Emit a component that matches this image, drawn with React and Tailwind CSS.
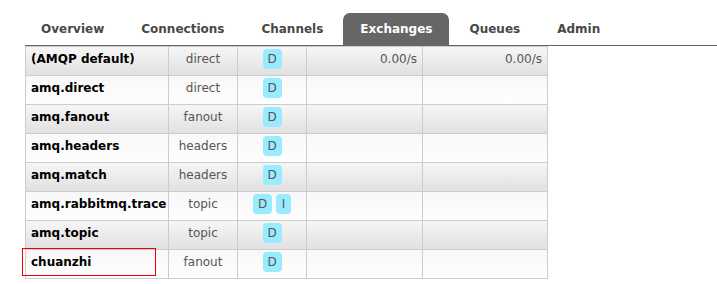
import React from 'react';

const tabs = ['Overview', 'Connections', 'Channels', 'Exchanges', 'Queues', 'Admin'];

const rows = [
  { name: '(AMQP default)', type: 'direct', features: ['D'], rates: true },
  { name: 'amq.direct', type: 'direct', features: ['D'] },
  { name: 'amq.fanout', type: 'fanout', features: ['D'] },
  { name: 'amq.headers', type: 'headers', features: ['D'] },
  { name: 'amq.match', type: 'headers', features: ['D'] },
  { name: 'amq.rabbitmq.trace', type: 'topic', features: ['D', 'I'] },
  { name: 'amq.topic', type: 'topic', features: ['D'] },
  { name: 'chuanzhi', type: 'fanout', features: ['D'], marked: true },
];

function Badge({ label }) {
  return (
    <span
      className={
        'inline-flex h-[20px] items-center justify-center rounded-[4px] bg-[#99ebff] text-[#555] ' +
        (label === 'I' ? 'w-[15px]' : 'w-[19px]')
      }
    >
      {label}
    </span>
  );
}

export default function App() {
  return (
    <div className="h-[284px] w-[717px] bg-white text-[12px] text-[#484848] [font-family:'DejaVu_Sans',Verdana,sans-serif]">
      {/* TABS */}
      <div className="pt-[13px]">
        <ul className="ml-[25px] flex gap-[3px] border-b border-[#666] pl-[-1px]">
          {tabs.map((t) => (
            <li
              key={t}
              className={
                'flex h-[32px] items-center rounded-t-[7px] px-[17px] font-bold first:ml-[-1px] ' +
                (t === 'Exchanges' ? 'bg-[#666] text-white' : 'text-[#484848]')
              }
            >
              {t}
            </li>
          ))}
        </ul>
      </div>

      {/* TABLE */}
      <table className="ml-[25px] w-[523px] table-fixed border-collapse">
        <colgroup>
          <col className="w-[143px]" />
          <col className="w-[69px]" />
          <col className="w-[69px]" />
          <col className="w-[116px]" />
          <col className="w-[125px]" />
        </colgroup>
        <tbody>
          {rows.map((r, i) => (
            <tr
              key={r.name}
              className={
                'h-[29px] ' +
                (i % 2 === 0
                  ? 'bg-gradient-to-b from-[#f6f6f6] to-[#e0e0e0]'
                  : 'bg-gradient-to-b from-[#f8f8f8] to-[#fefefe]')
              }
            >
              <td className="relative border border-[#ccc] px-[5px] pt-[3px] align-top font-bold text-black">
                {r.name}
                {r.marked && (
                  <span className="absolute left-[-4px] top-[-2px] h-[28px] w-[134px] border border-[#e00]" />
                )}
              </td>
              <td className="border border-[#ccc] pt-[3px] text-center align-top text-[#555]">{r.type}</td>
              <td className="border border-[#ccc] pt-[2px] text-center align-top">
                <span className="inline-flex gap-[4px]">
                  {r.features.map((f) => (
                    <Badge key={f} label={f} />
                  ))}
                </span>
              </td>
              <td className="border border-[#ccc] px-[5px] pt-[3px] text-right align-top text-[#555]">
                {r.rates ? '0.00/s' : ''}
              </td>
              <td className="border border-[#ccc] px-[5px] pt-[3px] text-right align-top text-[#555]">
                {r.rates ? '0.00/s' : ''}
              </td>
            </tr>
          ))}
        </tbody>
      </table>
    </div>
  );
}
